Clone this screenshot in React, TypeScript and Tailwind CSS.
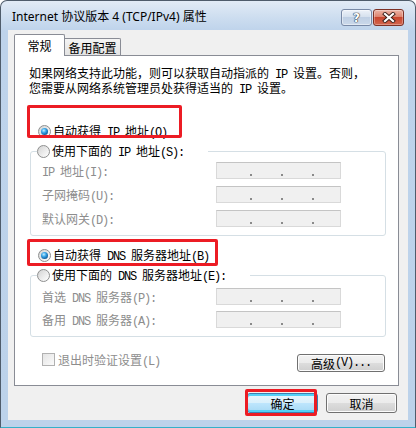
import React from "react";

const M = ({ children }: { children: React.ReactNode }) => (
  <span className="font-['Liberation_Mono',monospace] leading-none tracking-[-1.2px]">{children}</span>
);

function Radio({ checked }: { checked?: boolean }) {
  return (
    <span className="flex h-[13px] w-[13px] shrink-0 items-center justify-center rounded-full border border-[#8e8f8f] bg-[linear-gradient(135deg,#d2d2d2,#ececec_55%,#ffffff)]">
      {checked && (
        <span className="h-[7px] w-[7px] rounded-full bg-[radial-gradient(circle_at_40%_35%,#c4efff_0%,#3aa6e8_35%,#0b5a9a_75%,#0a3f70_100%)]" />
      )}
    </span>
  );
}

function IPBox() {
  return (
    <div className="h-[17px] w-[125px] border border-[#d9d9d9] border-t-[#c4c4c4] bg-[#f0f0f0]">
      <div className="flex h-full items-end gap-[29px] pb-[2px] pl-[33px]">
        <span className="h-[2px] w-[2px] bg-[#8a8a8a]" />
        <span className="h-[2px] w-[2px] bg-[#8a8a8a]" />
        <span className="h-[2px] w-[2px] bg-[#8a8a8a]" />
      </div>
    </div>
  );
}

function Row({ label }: { label: React.ReactNode }) {
  return (
    <div className="flex h-[17px] items-center">
      <div className="w-[174px] text-[#8d8d8d]">{label}</div>
      <IPBox />
    </div>
  );
}

export default function App() {
  return (
    <div className="h-[428px] w-[416px] overflow-hidden bg-white font-['Noto_Sans_CJK_SC',sans-serif] text-[12px] leading-[15px] text-black">
      <div className="flex h-[428px] w-[416px] flex-col rounded-t-[7px] border border-[#4f5c6b] border-b-[#34b0c8] bg-[linear-gradient(180deg,#e2ebf6_0px,#cbdcef_18px,#bed3eb_30px,#bcd2ea_100%)]">
        {/* title bar */}
        <div className="flex h-[29px] shrink-0">
          <div className="pl-[11px] pt-[8px] font-['Noto_Sans','Noto_Sans_CJK_SC',sans-serif] text-[12px] leading-[16px] text-black">
            Internet 协议版本 4 (TCP/IPv4) 属性
          </div>
          <div className="ml-auto mr-[11px] mt-[8px] flex gap-[1px]">
            <div className="flex h-[17px] w-[31px] items-center justify-center rounded-[3px] border border-[#7889a6] bg-[linear-gradient(180deg,#edf2f9,#d6e1ee_45%,#bfcfe4_50%,#cbd9ea)] shadow-[inset_0_0_0_1px_rgba(255,255,255,0.45)]">
              <span className="font-['DejaVu_Sans',sans-serif] text-[12px] font-bold leading-none text-white [text-shadow:0_0_1px_#1c2a3c,0_0_1px_#1c2a3c,0_0_1px_#1c2a3c]">
                ?
              </span>
            </div>
            <div className="flex h-[17px] w-[31px] items-center justify-center rounded-[3px] border border-[#7d3126] bg-[linear-gradient(180deg,#ecb4a6,#de8470_45%,#c9462f_50%,#d2664e)] shadow-[inset_0_0_0_1px_rgba(255,255,255,0.3)]">
              <svg width="14" height="11" viewBox="0 0 14 11">
                <path d="M3 2 L11 9 M11 2 L3 9" stroke="#3a1f1a" strokeWidth="4" strokeLinecap="square" />
                <path d="M3 2 L11 9 M11 2 L3 9" stroke="#ffffff" strokeWidth="2.2" strokeLinecap="square" />
              </svg>
            </div>
          </div>
        </div>

        {/* client */}
        <div className="mx-[7px] flex h-[390px] shrink-0 flex-col bg-[#f0f0f0]">
          {/* tabs */}
          <div className="relative z-10 -mb-px flex items-end pl-[6px] pt-[4px]">
            <div className="flex h-[22px] w-[51px] items-center justify-center rounded-t-[2px] border border-b-0 border-[#898c95] bg-white">
              常规
            </div>
            <div className="mb-px flex h-[17px] w-[56px] items-center justify-center rounded-tr-[2px] border border-b-0 border-l-0 border-[#898c95] bg-[linear-gradient(180deg,#f4f4f4,#e3e3e3)] pt-[1px]">
              备用配置
            </div>
          </div>

          {/* panel */}
          <div className="relative ml-[6px] flex h-[331px] w-[385px] shrink-0 flex-col border border-[#898c95] bg-white">
            <div className="ml-[14px] mt-[9px] flex flex-col">
              <div className="h-[15px] whitespace-nowrap">
                如果网络支持此功能，则可以获取自动指派的<M> IP </M>设置。否则，
              </div>
              <div className="h-[15px] whitespace-nowrap">
                您需要从网络系统管理员处获得适当的<M> IP </M>设置。
              </div>
            </div>

            <div className="ml-[23px] mt-[28px] flex h-[16px] items-center gap-[2px]">
              <Radio checked />
              <span>
                自动获得<M> IP </M>地址<M>(O)</M>
              </span>
            </div>

            <div className="relative ml-[15px] mt-[12px] flex w-[356px] flex-col gap-[7px] rounded-[3px] border border-[#d5dfe5] pb-[8px] pl-[11px] pt-[10px]">
              <div className="absolute left-[6px] top-[-9px] flex h-[16px] items-center gap-[2px] bg-white pr-[24px]">
                <Radio />
                <span>
                  使用下面的<M> IP </M>地址<M>(S):</M>
                </span>
              </div>
              <Row label={<><M>IP </M>地址<M>(I):</M></>} />
              <Row label={<>子网掩码<M>(U):</M></>} />
              <Row label={<>默认网关<M>(D):</M></>} />
            </div>

            <div className="ml-[23px] mt-[11px] flex h-[16px] items-center gap-[2px]">
              <Radio checked />
              <span>
                自动获得<M> DNS </M>服务器地址<M>(B)</M>
              </span>
            </div>

            <div className="relative ml-[15px] mt-[12px] flex w-[356px] flex-col gap-[6px] rounded-[3px] border border-[#d5dfe5] pb-[8px] pl-[11px] pt-[12px]">
              <div className="absolute left-[6px] top-[-9px] flex h-[16px] items-center gap-[2px] bg-white pr-[24px]">
                <Radio />
                <span>
                  使用下面的<M> DNS </M>服务器地址<M>(E):</M>
                </span>
              </div>
              <Row label={<>首选<M> DNS </M>服务器<M>(P):</M></>} />
              <Row label={<>备用<M> DNS </M>服务器<M>(A):</M></>} />
            </div>

            <div className="ml-[27px] mr-[13px] mt-[16px] flex items-start">
              <div className="flex h-[13px] items-center gap-[3px]">
                <span className="h-[13px] w-[13px] shrink-0 border border-[#b1b1b1] bg-[linear-gradient(135deg,#e4e4e4,#fbfbfb)]" />
                <span className="text-[#8d8d8d]">
                  退出时验证设置<M>(L)</M>
                </span>
              </div>
              <div className="ml-auto mt-[1px] flex h-[18px] w-[88px] items-center justify-center rounded-[3px] border border-[#707070] bg-[linear-gradient(180deg,#f2f2f2_0%,#ebebeb_50%,#dddddd_50%,#cfcfcf_100%)] shadow-[inset_0_0_0_1px_#fcfcfc]">
                高级<M>(V)...</M>
              </div>
            </div>

            {/* annotation boxes */}
            <div className="absolute left-[12px] top-[49px] h-[33px] w-[155px] rounded-[2px] border-[3px] border-[#ec1c24]" />
            <div className="absolute left-[12px] top-[183px] h-[27px] w-[191px] rounded-[2px] border-[3px] border-[#ec1c24]" />
          </div>

          {/* dialog buttons */}
          <div className="mt-[7px] flex justify-end gap-[8px] pr-[11px]">
            <div className="relative">
              <div className="flex h-[20px] w-[71px] items-center justify-center rounded-[3px] border border-[#3c7fb1] bg-[linear-gradient(180deg,#eaf6fd_0%,#d9f0fc_50%,#bee6fd_50%,#a7d9f5_100%)] shadow-[inset_0_2px_0_#55d0f7,inset_0_-2px_0_#55d0f7]">
                确定
              </div>
              <div className="absolute left-[-2px] top-[-4px] h-[27px] w-[72px] rounded-[2px] border-[3px] border-[#ec1c24]" />
            </div>
            <div className="flex h-[20px] w-[71px] items-center justify-center rounded-[3px] border border-[#707070] bg-[linear-gradient(180deg,#f2f2f2_0%,#ebebeb_50%,#dddddd_50%,#cfcfcf_100%)] shadow-[inset_0_0_0_1px_#fcfcfc]">
              取消
            </div>
          </div>
        </div>
      </div>
    </div>
  );
}
